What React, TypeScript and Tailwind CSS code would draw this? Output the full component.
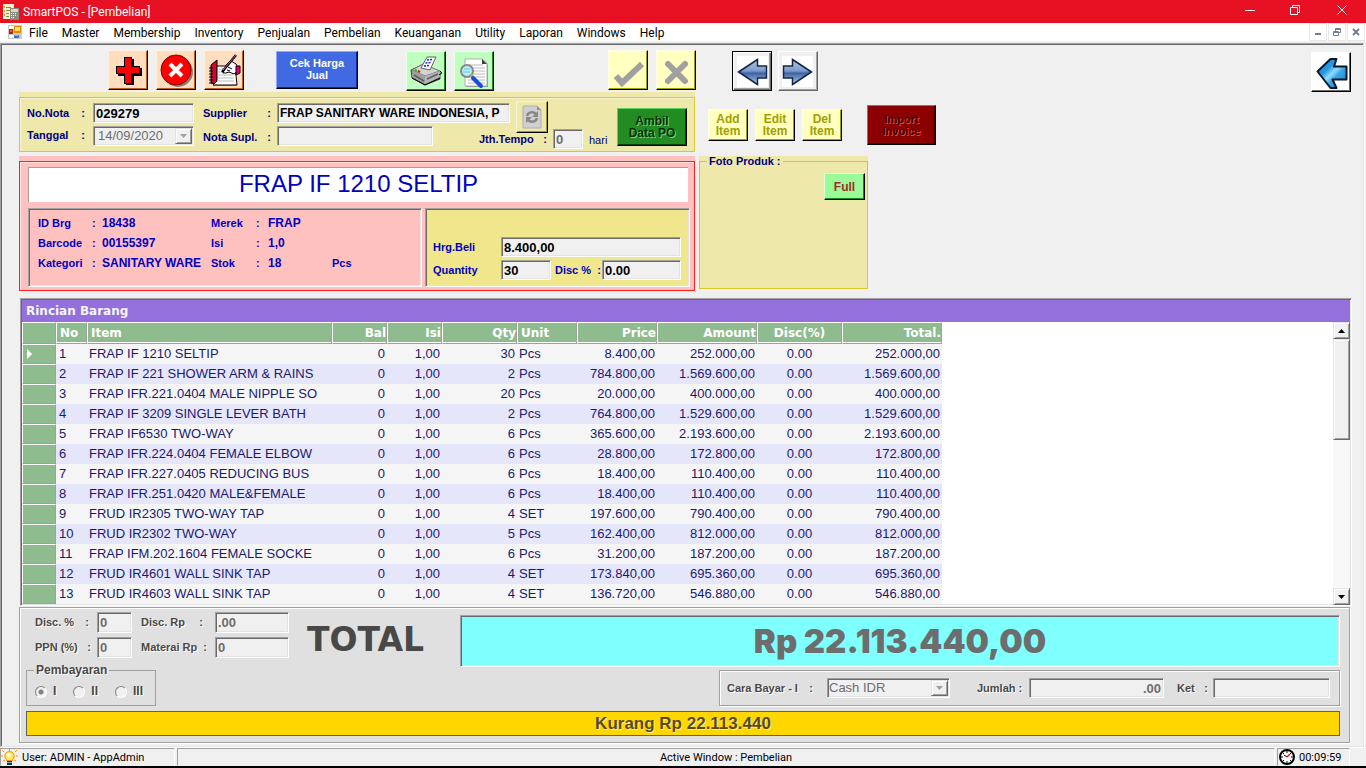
import type { ReactNode } from "react";
import clsx from "clsx";

const sunken =
  "border border-t-[#a0a0a0] border-l-[#a0a0a0] border-r-white border-b-white shadow-[inset_1px_1px_0_#696969,inset_-1px_-1px_0_#e3e3e3]";
const raised =
  "border border-t-[#e3e3e3] border-l-[#e3e3e3] border-r-[#696969] border-b-[#696969] shadow-[inset_1px_1px_0_#fff,inset_-1px_-1px_0_#a0a0a0] bg-[#f0f0f0]";

const menus = [
  "File",
  "Master",
  "Membership",
  "Inventory",
  "Penjualan",
  "Pembelian",
  "Keuanganan",
  "Utility",
  "Laporan",
  "Windows",
  "Help",
];

const rows = [
  ["FRAP IF 1210 SELTIP", "30", "Pcs", "8.400,00", "252.000,00"],
  ["FRAP IF 221 SHOWER ARM & RAINS", "2", "Pcs", "784.800,00", "1.569.600,00"],
  ["FRAP IFR.221.0404 MALE NIPPLE SO", "20", "Pcs", "20.000,00", "400.000,00"],
  ["FRAP IF 3209 SINGLE LEVER BATH", "2", "Pcs", "764.800,00", "1.529.600,00"],
  ["FRAP IF6530 TWO-WAY", "6", "Pcs", "365.600,00", "2.193.600,00"],
  ["FRAP IFR.224.0404 FEMALE ELBOW", "6", "Pcs", "28.800,00", "172.800,00"],
  ["FRAP IFR.227.0405 REDUCING BUS", "6", "Pcs", "18.400,00", "110.400,00"],
  ["FRAP IFR.251.0420 MALE&FEMALE", "6", "Pcs", "18.400,00", "110.400,00"],
  ["FRUD IR2305 TWO-WAY TAP", "4", "SET", "197.600,00", "790.400,00"],
  ["FRUD IR2302 TWO-WAY", "5", "Pcs", "162.400,00", "812.000,00"],
  ["FRAP IFM.202.1604 FEMALE SOCKE", "6", "Pcs", "31.200,00", "187.200,00"],
  ["FRUD IR4601 WALL SINK TAP", "4", "SET", "173.840,00", "695.360,00"],
  ["FRUD IR4603 WALL SINK TAP", "4", "SET", "136.720,00", "546.880,00"],
];

const columns = [
  { name: "No", width: "w-[31px]", align: "text-left pl-[3px]" },
  { name: "Item", width: "w-[245px]", align: "text-left pl-[3px]" },
  { name: "Bal", width: "w-[55px]", align: "text-right" },
  { name: "Isi", width: "w-[55px]", align: "text-right" },
  { name: "Qty", width: "w-[75px]", align: "text-right" },
  { name: "Unit", width: "w-[60px]", align: "text-left pl-[3px]" },
  { name: "Price", width: "w-[80px]", align: "text-right" },
  { name: "Amount", width: "w-[100px]", align: "text-right" },
  { name: "Disc(%)", width: "w-[85px]", align: "text-center" },
  { name: "Total.", width: "w-[100px]", align: "text-right" },
];

type ToolButtonProps = {
  label: string;
  className: string;
  children: ReactNode;
};

const ToolButton = ({ label, className, children }: ToolButtonProps) => (
  <button
    type="button"
    aria-label={label}
    className={clsx("flex size-10 shrink-0 items-center justify-center border", className)}
  >
    {children}
  </button>
);

const peach =
  "bg-[#ffdec0] border-[#fff0e0] border-r-black border-b-black shadow-[inset_-1px_-1px_0_#c06010]";
const mint =
  "bg-[#c0ffc0] border-[#e8ffe8] border-r-black border-b-black shadow-[inset_-1px_-1px_0_#109010]";
const cream =
  "bg-[#ffffc0] border-[#ffffe8] border-r-black border-b-black shadow-[inset_-1px_-1px_0_#a0a000]";

type FieldProps = {
  id: string;
  label: string;
  value: string;
  className?: string;
  size?: string;
  disabled?: boolean;
};

const Field = ({ id, label, value, className, size = "text-[13px]", disabled }: FieldProps) => (
  <input
    id={id}
    aria-label={label}
    defaultValue={value}
    disabled={disabled}
    className={clsx(
      sunken,
      size,
      "h-5 min-w-0 bg-[#f0f0f0] px-[2px] font-bold",
      disabled ? "text-[#6d6d6d]" : "text-black",
      className,
    )}
  />
);

const DropArrow = () => (
  <span className={clsx(raised, "flex w-[17px] items-center justify-center")}>
    <svg width="7" height="4" viewBox="0 0 7 4">
      <path d="M0 0h7L3.500 4z" fill="#a0a0a0" />
    </svg>
  </span>
);

const BlueArrow = ({ flip }: { flip?: boolean }) => (
  <svg
    width="36"
    height="36"
    viewBox="0 0 36 36"
    className={clsx(flip && "-scale-x-100")}
  >
    <defs>
      <linearGradient id="steel" x1="0" y1="0" x2="0" y2="1">
        <stop offset="0" stopColor="#b4c8e4" />
        <stop offset="0.45" stopColor="#7c9ccc" />
        <stop offset="0.55" stopColor="#3f62a0" />
        <stop offset="1" stopColor="#b8d0ee" />
      </linearGradient>
    </defs>
    <path fill="#fff" d="M3 3h31v31H3z" />
    <path
      d="M4.500 19 23.500 6.500V13h9v12h-9v6.500z"
      fill="url(#steel)"
      stroke="#12264a"
      strokeWidth="1.500"
    />
  </svg>
);

const TitleBar = () => (
  <header className="flex h-[23px] items-center bg-[#e81123] pl-[3px] text-white">
    <svg width="16" height="16" viewBox="0 0 16 16" shapeRendering="crispEdges">
      <path fill="#f4eecb" d="M0 0h11v15H0z" />
      <path fill="#d8a030" d="M1 2h1v2H1zM1 6h1v2H1zM1 10h1v2H1z" />
      <path stroke="#6a9a50" d="M3 3.500h5M3 6.500h4M3 9.500h3M3 12.500h3" />
      <path fill="#8a8a80" d="M7 4h9v12H7z" />
      <path fill="#d6d6c8" d="M8 5h7v3H8z" />
      <path
        fill="#fff"
        d="M8 9h1v1H8zM10 9h1v1h-1zM12 9h1v1h-1zM8 11h1v1H8zM10 11h1v1h-1zM12 11h1v1h-1zM8 13h1v1H8zM10 13h1v1h-1z"
      />
      <path fill="#e08030" d="M14 9h1v5h-1z" />
    </svg>
    <h1 className="ml-1 font-[Roboto,sans-serif] text-xs">SmartPOS - [Pembelian]</h1>
    <div className="ml-auto flex h-full pb-[3px]">
      <button type="button" aria-label="Minimize" className="flex w-[45px] items-center justify-center">
        <svg width="10" height="10" viewBox="0 0 10 10" stroke="#fff">
          <path d="M0 5.500h10" />
        </svg>
      </button>
      <button type="button" aria-label="Restore" className="flex w-[45px] items-center justify-center">
        <svg width="10" height="10" viewBox="0 0 10 10" fill="none" stroke="#fff">
          <path d="M.5 2.500h7v7h-7zM2.500 2.500v-2h7v7h-2" />
        </svg>
      </button>
      <button type="button" aria-label="Close" className="flex w-[49px] items-center justify-center">
        <svg width="10" height="10" viewBox="0 0 10 10" stroke="#fff">
          <path d="m.5.5 9 9M9.500.5l-9 9" />
        </svg>
      </button>
    </div>
  </header>
);

const MenuBar = () => (
  <nav className="flex h-5 items-center border-b-2 border-[#f0f0f0] bg-white pl-2">
    <svg width="14" height="14" viewBox="0 0 14 14" shapeRendering="crispEdges">
      <path fill="#c8c8c8" d="M0 0h14v14H0z" />
      <path fill="#fff" d="M1 1h5v3H1zM1 10h5v3H1z" />
      <path fill="#b02018" d="M1 4h4v5H1z" />
      <path fill="#e06050" d="M2 5h2v2H2z" />
      <path fill="#d89000" d="M6 1h7v7H6z" />
      <path fill="#ffd860" d="M7 2h5v4H7z" />
      <path fill="#3a70d8" d="M6 10h5v3H6z" />
      <path fill="#88b0f8" d="M7 10h3v1H7z" />
    </svg>
    <ul className="ml-[7px] flex gap-[14px] pt-[2px] font-[Roboto,sans-serif] text-xs">
      {menus.map((menu) => (
        <li key={menu}>
          <button type="button">{menu}</button>
        </li>
      ))}
    </ul>
    <div className="ml-auto flex gap-px pr-px">
      <button type="button" aria-label="Minimize child" className="flex size-[18px] items-center justify-center border border-[#e8e8e8]">
        <svg width="8" height="8" viewBox="0 0 8 8" fill="#708090">
          <path d="M1 5h6v2H1z" />
        </svg>
      </button>
      <button type="button" aria-label="Restore child" className="flex size-[18px] items-center justify-center border border-[#e8e8e8]">
        <svg width="8" height="8" viewBox="0 0 8 8" fill="none" stroke="#708090">
          <path d="M.5 3.500h5v4h-5zM0 4.500h6M2.500 3V.5h5v4H6M2 1.500h6" />
        </svg>
      </button>
      <button type="button" aria-label="Close child" className="flex size-[18px] items-center justify-center border border-[#e8e8e8]">
        <svg width="8" height="8" viewBox="0 0 8 8" stroke="#708090" strokeWidth="2">
          <path d="m1 1 6 6M7 1 1 7" />
        </svg>
      </button>
    </div>
  </nav>
);

const Toolbar = () => (
  <div className="flex h-[42px] items-start pl-[105px]">
    <div className="flex gap-2">
      <ToolButton label="Tambah" className={peach}>
        <svg width="38" height="38" viewBox="0 0 38 38" shapeRendering="crispEdges">
          <path d="M17 8h8v9h8v8h-8v9h-8v-9H9v-8h8z" />
          <path
            d="M15.500 6.500h7v9h8v7h-8v10h-7v-10h-8v-7h8z"
            fill="#f00"
            stroke="#000"
          />
        </svg>
      </ToolButton>
      <ToolButton label="Hapus" className={peach}>
        <svg width="38" height="38" viewBox="0 0 38 38">
          <circle cx="21" cy="21" r="15" fill="#808080" />
          <circle cx="19" cy="19" r="15" fill="#f00" stroke="#800000" />
          <path d="m13 13 12 12M25 13 13 25" stroke="#fff" strokeWidth="4" />
        </svg>
      </ToolButton>
      <ToolButton label="Edit" className={peach}>
        <svg width="38" height="38" viewBox="0 0 38 38" strokeLinejoin="round">
          <path d="M12 9v24l-6-1V14z" fill="#e00030" stroke="#000" />
          <path d="M4 17h4M4 20h4M4 23h4M4 26h4M4 29h4M4 32h4" stroke="#000" />
          <path d="M12 15h18l2 19H8l4-4z" fill="#fff" stroke="#000" />
          <path d="M8 34.500h24" stroke="#f00" />
          <path d="M14 18h6M13 21h15M13 24h15M13 27h16M12 30h17" stroke="#b8b8b8" />
          <path d="m18 22 3-8 5-4 5 3 3 6-5 4-5-2-3 1z" fill="#fff" stroke="#000" />
          <path d="m23 16 4 2M22 19l3 1" stroke="#000" />
          <path d="m31 15 4 0v7l-4 2z" fill="#e0007a" stroke="#000" />
          <path d="M31 4 17 21" stroke="#000" strokeWidth="2.500" />
          <path d="M31 4 18 19" stroke="#c060c0" />
        </svg>
      </ToolButton>
    </div>
    <button
      type="button"
      className="mt-px ml-8 h-[38px] w-[82px] border border-[#90a8f8] border-r-black border-b-black bg-[#4169e1] pb-[2px] text-[11px] leading-3 font-bold text-white shadow-[inset_-1px_-1px_0_#102890]"
    >
      Cek Harga
      <br />
      Jual
    </button>
    <div className="mt-px ml-12 flex gap-2">
      <ToolButton label="Cetak" className={mint}>
        <svg width="38" height="38" viewBox="0 0 38 38" strokeLinejoin="round">
          <path d="m4 18 11-5 18 7v7l-15 6-13-7z" fill="#808080" stroke="#404040" />
          <path d="m5 18 13 6 15-5-17-7z" fill="#d4d4d4" stroke="#707070" />
          <path d="M5 18v7l13 7v-8z" fill="#a0a0a0" />
          <path d="m18 24 15-5v6l-15 7z" fill="#b4b4b4" />
          <path d="m5 26 13 7 15-7" stroke="#000" fill="none" />
          <path d="m20 27 11-5M7 23l10 6" stroke="#606060" strokeWidth="1.500" />
          <path d="m33 19 2 2-3 2" stroke="#000" fill="none" />
          <path d="m14 16 6-11h9l-6 13z" fill="#fff" stroke="#606060" />
          <path d="m20 8 6-.5M18.500 11l6-.5M17 14l6-.5" stroke="#2020e0" strokeWidth="1.500" strokeDasharray="2 1" />
          <path d="m8 18 2 1" stroke="#0c0" strokeWidth="2" />
          <path d="m11 19 2 1" stroke="#f00" strokeWidth="2" />
        </svg>
      </ToolButton>
      <ToolButton label="Pratinjau" className={mint}>
        <svg width="38" height="38" viewBox="0 0 38 38">
          <path d="M11 8h17l5 5v22H11z" fill="#909090" />
          <path d="M10 7h17l5 4v23H10z" fill="#fff" stroke="#b0b0b0" />
          <path d="M27 7v5h5z" fill="#404040" />
          <path d="M13 13h15M13 16h17M13 19h17M13 22h17M13 25h17M13 28h17M13 31h17" stroke="#b8b8b8" />
          <circle cx="12" cy="19" r="6" fill="#b0f0f8" stroke="#888" strokeWidth="2" />
          <path d="M9 17h6M8 20h7" stroke="#70c8e0" />
          <path d="m16 23 3 3" stroke="#e8a040" strokeWidth="3" />
          <path d="m18 26 8 8" stroke="#1050e0" strokeWidth="4" strokeLinecap="round" />
        </svg>
      </ToolButton>
    </div>
    <div className="ml-[114px] flex gap-2">
      <ToolButton label="Simpan" className={cream}>
        <svg width="38" height="38" viewBox="0 0 38 38" fill="none" stroke="#a0a0a0" strokeWidth="6">
          <path d="m7 25 6 7 20-19" />
        </svg>
      </ToolButton>
      <ToolButton label="Batal" className={cream}>
        <svg width="38" height="38" viewBox="0 0 38 38" stroke="#a0a0a0" strokeWidth="6" strokeLinecap="round">
          <path d="m11 13 17 17M28 13 11 30" />
        </svg>
      </ToolButton>
    </div>
    <div className="mt-px ml-9 flex gap-[6px]">
      <ToolButton
        label="Sebelumnya"
        className="border-black bg-[#f0f0f0] shadow-[inset_1px_1px_0_#fff,inset_-1px_-1px_0_#696969,inset_-2px_-2px_0_#a0a0a0]"
      >
        <BlueArrow />
      </ToolButton>
      <ToolButton
        label="Berikutnya"
        className="border-white border-r-[#696969] border-b-[#696969] bg-[#f0f0f0] shadow-[inset_-1px_-1px_0_#a0a0a0]"
      >
        <BlueArrow flip />
      </ToolButton>
    </div>
    <div className="mt-[2px] mr-3 ml-auto">
      <ToolButton
        label="Kembali"
        className="border-white border-r-black border-b-black bg-white shadow-[inset_-1px_-1px_0_#696969]"
      >
        <svg width="38" height="38" viewBox="0 0 38 38" strokeLinejoin="round">
          <defs>
            <linearGradient id="sky" x1="0" y1="0" x2="1" y2="1">
              <stop offset="0" stopColor="#1888d0" />
              <stop offset="0.35" stopColor="#2898e0" />
              <stop offset="0.5" stopColor="#90dcff" />
              <stop offset="0.62" stopColor="#38a8e8" />
              <stop offset="1" stopColor="#1078c0" />
            </linearGradient>
          </defs>
          <path
            d="M5.500 18.500 18.500 6h6L22 13.500h12.500v13H20.500l4 8.500h-6z"
            fill="url(#sky)"
            stroke="#061828"
            strokeWidth="2"
          />
        </svg>
      </ToolButton>
    </div>
  </div>
);

const NotaPanel = () => (
  <div className="bg-[#eee8aa] pt-[5px] text-[11px] font-bold text-[#000080]">
    <div className="flex border border-[#d8c830] pt-[3px] pr-[7px] pb-[2px] pl-[7px] shadow-[inset_1px_1px_0_#f8f4d0]">
      <div className="w-[168px]">
        <div className="flex h-6 items-center">
          <label htmlFor="nota" className="flex w-[66px] justify-between pr-2">
            No.Nota <span>:</span>
          </label>
          <Field id="nota" label="No. Nota" value="029279" className="w-[101px]" />
        </div>
        <div className="flex h-6 items-start pt-px">
          <label htmlFor="tanggal" className="flex w-[66px] justify-between pt-px pr-2">
            Tanggal <span>:</span>
          </label>
          <div className={clsx(sunken, "flex h-5 w-[101px] bg-[#f0f0f0] p-px")}>
            <input
              id="tanggal"
              disabled
              defaultValue="14/09/2020"
              className="min-w-0 flex-1 pl-[3px] text-[13px] font-normal text-[#6d6d6d]"
            />
            <DropArrow />
          </div>
        </div>
      </div>
      <div className="ml-2 flex-1">
        <div className="flex h-6 items-center">
          <label htmlFor="supplier" className="flex w-[74px] justify-between pr-[6px]">
            Supplier <span>:</span>
          </label>
          <Field
            id="supplier"
            label="Supplier"
            value="FRAP SANITARY WARE INDONESIA, P"
            size="text-xs"
            className="w-[233px]"
          />
          <button
            type="button"
            aria-label="Refresh supplier"
            className="ml-[6px] flex h-8 w-8 items-center justify-center self-start border border-[#f8f4d0] border-r-black border-b-black shadow-[inset_-1px_-1px_0_#a09820]"
          >
            <svg width="20" height="24" viewBox="0 0 20 24">
              <path d="M1 1h14l4 4v18H1z" fill="#cfcfcf" stroke="#b0b0b0" />
              <path d="M15 1v4h4z" fill="#909090" />
              <path d="M5 11c1-4 6-5 9-2M15 13c-1 4-6 5-9 2" fill="none" stroke="#888" strokeWidth="2.500" />
              <path d="M16 6v6h-6zM4 18v-6h6z" fill="#888" />
            </svg>
          </button>
        </div>
        <div className="flex h-6 items-start pt-px">
          <label htmlFor="nota-supl" className="flex w-[74px] justify-between pt-[3px] pr-[6px]">
            Nota Supl. <span>:</span>
          </label>
          <Field id="nota-supl" label="Nota Supl." value="" className="w-[156px]" />
          <label htmlFor="tempo" className="ml-[46px] flex w-[74px] justify-between self-end pr-[6px] pb-[2px]">
            Jth.Tempo <span>:</span>
          </label>
          <Field id="tempo" label="Jth. Tempo" value="0" disabled className="w-[30px] self-end" />
          <span className="self-end pb-px pl-[6px] font-normal">hari</span>
        </div>
      </div>
      <button
        type="button"
        disabled
        className="mt-[7px] h-[38px] w-[70px] border border-[#60d060] border-r-black border-b-black bg-[#228b22] text-xs leading-3 font-bold text-[#0a300a] shadow-[inset_-1px_-1px_0_#0c400c] [text-shadow:1px_1px_0_#70d870]"
      >
        Ambil
        <br />
        Data PO
      </button>
    </div>
  </div>
);

const ProdukPanel = () => (
  <div className="mt-1 bg-[#ffc0c0] pt-[5px] text-[11px] font-bold text-[#0000c0]">
    <div className="border border-[#ff2020] pt-[5px] pr-1 pb-[3px] pl-2 shadow-[inset_1px_1px_0_#ffe0e0]">
      <h2 className="mr-[2px] h-[35px] border-t border-l border-[#a0a0a0] bg-white text-center text-2xl leading-[32px] font-normal">
        FRAP IF 1210 SELTIP
      </h2>
      <div className="mt-[6px] flex gap-[3px]">
        <dl
          className={clsx(
            sunken,
            "grid h-[79px] flex-1 grid-cols-[54px_10px_109px_45px_12px_64px_1fr] content-start gap-y-[5px] pt-[7px] pl-[9px] leading-[15px]",
          )}
        >
          <dt>ID Brg</dt>
          <span>:</span>
          <dd className="text-xs/[15px]">18438</dd>
          <dt>Merek</dt>
          <span>:</span>
          <dd className="col-span-2 text-xs/[15px]">FRAP</dd>
          <dt>Barcode</dt>
          <span>:</span>
          <dd className="text-xs/[15px]">00155397</dd>
          <dt>Isi</dt>
          <span>:</span>
          <dd className="col-span-2 text-xs/[15px]">1,0</dd>
          <dt>Kategori</dt>
          <span>:</span>
          <dd className="text-xs/[15px] whitespace-nowrap">SANITARY WARE</dd>
          <dt>Stok</dt>
          <span>:</span>
          <dd className="text-xs/[15px]">18</dd>
          <dd>Pcs</dd>
        </dl>
        <div className={clsx(sunken, "flex h-[79px] w-[265px] flex-col justify-end gap-[3px] bg-[#f0e68c] pb-[6px] pl-[7px]")}>
          <div className="flex items-center">
            <label htmlFor="harga" className="w-[68px]">
              Hrg.Beli
            </label>
            <Field id="harga" label="Harga Beli" value="8.400,00" className="w-[180px]" />
          </div>
          <div className="flex items-center">
            <label htmlFor="qty" className="w-[68px]">
              Quantity
            </label>
            <Field id="qty" label="Quantity" value="30" className="w-[50px]" />
            <label htmlFor="disc" className="flex w-[51px] justify-between pr-px pl-1">
              Disc % <span>:</span>
            </label>
            <Field id="disc" label="Disc" value="0.00" className="w-[79px]" />
          </div>
        </div>
      </div>
    </div>
  </div>
);

const SidePanel = () => (
  <div className="flex flex-col items-start">
    <div className="mt-[13px] flex h-10 items-center pl-[9px]">
      <div className="flex gap-[7px]">
        {["Add", "Edit", "Del"].map((action) => (
          <button
            key={action}
            type="button"
            disabled
            className={clsx(cream, "h-8 w-10 border text-xs leading-3 font-bold text-[#a0a000]")}
          >
            {action}
            <br />
            Item
          </button>
        ))}
      </div>
      <button
        type="button"
        disabled
        className="ml-[25px] h-10 w-[69px] border border-[#ff4040] border-r-black border-b-black bg-[#8b0000] text-[11px] leading-3 font-bold text-[#300000] shadow-[inset_-1px_-1px_0_#400000] [text-shadow:1px_1px_0_#ff4040]"
      >
        Import
        <br />
        Invoice
      </button>
    </div>
    <div className="mt-[11px] w-[169px] bg-[#eee8aa]">
      <fieldset className="flex h-[133px] justify-end border border-[#d8c830] px-[2px] pt-[6px]">
        <legend className="ml-[5px] px-[2px] text-[11px] leading-[11px] font-bold text-[#000080]">
          Foto Produk :
        </legend>
        <button
          type="button"
          className="h-[27px] w-[41px] border border-[#d8ffd8] border-r-black border-b-black bg-[#98fb98] text-xs font-bold text-[#a52a2a] shadow-[inset_-1px_-1px_0_#109010]"
        >
          Full
        </button>
      </fieldset>
    </div>
  </div>
);

const ScrollBar = () => (
  <div className="flex w-[17px] flex-col bg-[#f8f8f8]">
    <button type="button" aria-label="Scroll up" className={clsx(raised, "flex h-[17px] items-center justify-center")}>
      <svg width="7" height="4" viewBox="0 0 7 4">
        <path d="M0 4h7L3.500 0z" />
      </svg>
    </button>
    <div className={clsx(raised, "h-[101px]")} />
    <button type="button" aria-label="Scroll down" className={clsx(raised, "mt-auto flex h-[17px] items-center justify-center")}>
      <svg width="7" height="4" viewBox="0 0 7 4">
        <path d="M0 0h7L3.500 4z" />
      </svg>
    </button>
  </div>
);

const RincianBarang = () => (
  <section className={clsx(sunken, "mt-[7px] mr-[11px] ml-px flex flex-1 flex-col bg-white px-px pt-px")}>
    <h2 className="h-[22px] bg-[#9370db] pl-1 font-['DejaVu_Sans',sans-serif] text-xs leading-[22px] font-bold text-[#f5f5f5]">
      Rincian Barang
    </h2>
    <div className="flex flex-1 justify-between">
      <table className="w-[920px] table-fixed border-separate border-spacing-0 self-start text-[13px] text-[#191970]">
        <thead className="font-['DejaVu_Sans',sans-serif] text-xs text-white">
          <tr className="h-[22px]">
            <th className="w-[34px] border border-white border-r-[#a0a0a0] border-b-[#a0a0a0] bg-[#8fbc8f]" />
            {columns.map((col) => (
              <th
                key={col.name}
                scope="col"
                className={clsx(
                  "border border-white border-r-[#a0a0a0] border-b-[#a0a0a0] bg-[#8fbc8f] p-0 leading-4 font-bold shadow-[inset_0_-1px_0_#fff]",
                  col.width,
                  col.align,
                )}
              >
                {col.name}
              </th>
            ))}
          </tr>
        </thead>
        <tbody>
          {rows.map(([item, qty, unit, price, amount], i) => (
            <tr key={item} className="h-5 odd:bg-[#f5f5f5] even:bg-[#e6e6fa] *:p-0 *:leading-[18px]">
              <td className="border border-white border-r-[#a0a0a0] border-b-[#a0a0a0] bg-[#8fbc8f]">
                {i === 0 && (
                  <svg width="6" height="10" viewBox="0 0 6 10" className="ml-1" fill="#fff">
                    <path d="M0 0v10l5-5z" />
                  </svg>
                )}
              </td>
              <td>
                <span className="pl-[3px]">{i + 1}</span>
              </td>
              <td className="whitespace-nowrap">
                <span className="pl-[2px]">{item}</span>
              </td>
              <td className="text-right">
                <span className="pr-[2px]">0</span>
              </td>
              <td className="text-right">
                <span className="pr-[2px]">1,00</span>
              </td>
              <td className="text-right">
                <span className="pr-[2px]">{qty}</span>
              </td>
              <td>
                <span className="pl-[2px]">{unit}</span>
              </td>
              <td className="text-right">
                <span className="pr-[2px]">{price}</span>
              </td>
              <td className="text-right">
                <span className="pr-[2px]">{amount}</span>
              </td>
              <td className="text-center">0.00</td>
              <td className="text-right">
                <span className="pr-[2px]">{amount}</span>
              </td>
            </tr>
          ))}
        </tbody>
      </table>
      <ScrollBar />
    </div>
  </section>
);

const etched = "border border-[#a0a0a0] shadow-[inset_1px_1px_0_#fff,1px_1px_0_#fff]";

const Pembayaran = () => (
  <fieldset className="w-[130px] border border-[#a0a0a0] pb-[6px] pl-2">
    <legend className="ml-[-1px] px-[2px] text-xs leading-3">Pembayaran</legend>
    <div className="flex items-center gap-[17px] pt-2">
      {["I", "II", "III"].map((n, i) => (
        <label key={n} className="flex items-center gap-[6px] text-xs leading-[15px]">
          <input
            type="radio"
            name="pembayaran"
            disabled
            defaultChecked={i === 0}
            className="size-3 appearance-none rounded-full border border-[#808080] border-r-white border-b-white bg-[#f0f0f0] checked:bg-[radial-gradient(circle,#808080_2px,#f0f0f0_3px)]"
          />
          {n}
        </label>
      ))}
    </div>
  </fieldset>
);

const TotalPanel = () => (
  <section className={clsx(etched, "mt-px mr-[13px] bg-[#e0e0e0] pt-1 pr-[9px] pb-[6px] pl-[6px] text-[11px] font-bold text-[#484848]")}>
    <div className="flex items-start">
      <div className="grid grid-cols-[62px_35px_83px_74px] items-center gap-y-1 pl-[9px] [text-shadow:1px_1px_0_#fff]">
        <label htmlFor="disc-persen" className="flex justify-between pr-2">
          Disc. % <span>:</span>
        </label>
        <Field id="disc-persen" label="Disc. %" value="0" disabled className="h-[21px]" />
        <label htmlFor="disc-rp" className="flex justify-between pr-3 pl-[9px]">
          Disc. Rp <span>:</span>
        </label>
        <Field id="disc-rp" label="Disc. Rp" value=".00" disabled className="h-[21px]" />
        <label htmlFor="ppn" className="flex justify-between pr-[6px]">
          PPN (%) <span>:</span>
        </label>
        <Field id="ppn" label="PPN" value="0" disabled className="h-[21px]" />
        <label htmlFor="materai" className="flex justify-between pr-2 pl-[9px]">
          Materai Rp <span>:</span>
        </label>
        <Field id="materai" label="Materai" value="0" disabled className="h-[21px]" />
      </div>
      <strong className="ml-[18px] w-[153px] pt-[6px] font-['DejaVu_Sans',sans-serif] text-[33px] leading-[44px] text-[#484848]">
        TOTAL
      </strong>
      <output
        className={clsx(
          sunken,
          "mt-[3px] h-[52px] flex-1 bg-[#80ffff] text-center font-[Inter,sans-serif] text-[33px] leading-[50px] font-black text-[#6d6d6d]",
        )}
      >
        Rp 22.113.440,00
      </output>
    </div>
    <div className="-mt-[3px] flex items-end justify-between [text-shadow:1px_1px_0_#fff]">
      <Pembayaran />
      <div className={clsx(etched, "flex h-9 items-center pr-[9px] pl-[7px]")}>
        <label htmlFor="cara" className="flex w-[100px] justify-between pr-[14px]">
          Cara Bayar - I <span>:</span>
        </label>
        <div className={clsx(sunken, "flex h-5 w-[123px] bg-[#f0f0f0] p-px")}>
          <select
            id="cara"
            disabled
            className="min-w-0 flex-1 appearance-none text-[13px] leading-4 font-normal text-[#6d6d6d] opacity-100"
          >
            <option>Cash IDR</option>
          </select>
          <DropArrow />
        </div>
        <label htmlFor="jumlah" className="ml-[27px] w-[52px]">
          Jumlah :
        </label>
        <Field id="jumlah" label="Jumlah" value=".00" disabled className="w-[135px] text-right" />
        <label htmlFor="ket" className="ml-[13px] flex w-[36px] justify-between pr-[5px]">
          Ket <span>:</span>
        </label>
        <Field id="ket" label="Ket" value="" disabled className="w-[117px]" />
      </div>
    </div>
    <div className="mt-[5px] h-[25px] border border-[#606060] bg-[#ffd700] text-center text-[17px] leading-[23px] text-[#584a10] [text-shadow:1px_1px_0_#fff0a0]">
      Kurang Rp 22.113.440
    </div>
  </section>
);

const StatusBar = () => (
  <footer className="flex h-[21px] items-end gap-[2px] border-b-2 border-black font-[Roboto,sans-serif] text-[11px] text-black">
    <div className="flex h-[18px] w-[175px] items-center border border-t-[#a0a0a0] border-r-white border-b-transparent border-l-[#a0a0a0]">
      <svg width="17" height="17" viewBox="0 0 17 17">
        <path
          d="M8.500 0v2M1 1l2 2M16 1l-2 2M0 7h2M15 7h2M2 12l2-1M15 12l-2-1"
          stroke="#ff9000"
        />
        <path d="M8.500 2.500a4.500 4.500 0 0 1 3 8v1h-6v-1a4.500 4.500 0 0 1 3-8z" fill="#ffe860" stroke="#f09010" />
        <circle cx="7.500" cy="6" r="2" fill="#fff" />
        <path d="M6 12h5v4H6z" fill="#203050" />
        <path d="M6 13.500h5" stroke="#90a8d0" />
      </svg>
      <span className="ml-1 pt-[2px]">User: ADMIN - AppAdmin</span>
    </div>
    <div className="h-[18px] flex-1 border border-t-[#a0a0a0] border-r-white border-b-transparent border-l-[#a0a0a0] text-center leading-[18px]">
      Active Window : Pembelian
    </div>
    <div className="mr-4 flex h-[18px] w-[73px] items-center border border-t-[#a0a0a0] border-r-white border-b-transparent border-l-[#a0a0a0] pl-px">
      <svg width="16" height="16" viewBox="0 0 16 16">
        <circle cx="8" cy="8" r="7" fill="#fff" stroke="#000" strokeWidth="2" />
        <path
          d="M8 2v2M8 12v2M2 8h2M12 8h2M4 4l1 1M12 4l-1 1M4 12l1-1M12 12l-1-1M8 8 5 6"
          stroke="#000"
        />
        <path d="m8 8 3-3" stroke="#f00" strokeWidth="1.500" />
      </svg>
      <span className="ml-1 pt-[2px]">00:09:59</span>
    </div>
  </footer>
);

export default function App() {
  return (
    <div className="flex min-h-screen flex-col bg-[#f0f0f0] font-['Liberation_Sans',Arial,sans-serif] text-black">
      <TitleBar />
      <MenuBar />
      <main className="mr-[2px] flex flex-1 flex-col border border-t-[#a0a0a0] border-r-[#e3e3e3] border-b-[#e3e3e3] border-l-[#a0a0a0] pt-[6px] pb-[3px] pl-[2px] shadow-[inset_1px_1px_0_#696969,1px_1px_0_#fff]">
        <Toolbar />
        <div className="ml-4 flex flex-1 flex-col">
          <div className="flex gap-1">
            <div className="w-[676px]">
              <NotaPanel />
              <ProdukPanel />
            </div>
            <SidePanel />
          </div>
          <RincianBarang />
          <TotalPanel />
        </div>
      </main>
      <StatusBar />
    </div>
  );
}
